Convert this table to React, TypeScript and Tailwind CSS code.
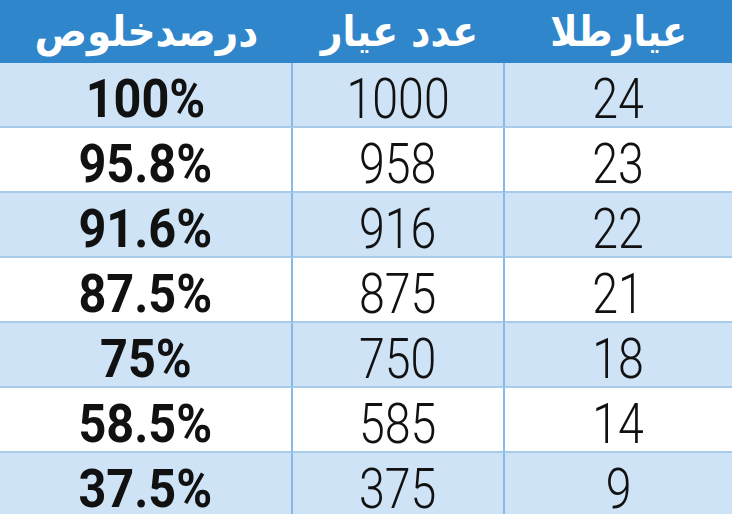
const rows = [
  ['100%', '1000', '24'],
  ['95.8%', '958', '23'],
  ['91.6%', '916', '22'],
  ['87.5%', '875', '21'],
  ['75%', '750', '18'],
  ['58.5%', '585', '14'],
  ['37.5%', '375', '9'],
]

const num = "font-['Roboto',sans-serif]"

export default function App() {
  return (
    <div className="w-[732px] h-[514px] overflow-hidden bg-white">
      <div className="grid grid-cols-[293px_212px_1fr] h-[63px] bg-[#2f86cb] text-white font-['DejaVu_Sans',sans-serif] font-bold text-[42px] leading-none">
        <div className="flex items-center justify-center" dir="rtl">
          <span className="inline-block scale-x-[0.93]">درصدخلوص</span>
        </div>
        <div className="flex items-center justify-center" dir="rtl">
          <span className="inline-block scale-x-[0.9]">عدد عیار</span>
        </div>
        <div className="flex items-center justify-center" dir="rtl">
          <span className="inline-block scale-x-[0.87]">عیارطلا</span>
        </div>
      </div>
      {rows.map((r, i) => (
        <div
          key={i}
          className={`grid grid-cols-[293px_212px_1fr] h-[65px] border-b-2 border-[#a8cbea] text-[#111] leading-none ${i % 2 === 0 ? 'bg-[#cfe3f6]' : 'bg-white'}`}
        >
          <div className={`${num} font-bold text-[54px] flex items-center justify-center pt-2 border-r-2 border-[#86b8e8]`}>
            <span className="inline-block scale-x-[0.9]">{r[0]}</span>
          </div>
          <div className={`${num} font-[350] text-[56px] flex items-center justify-center pt-2 border-r-2 border-[#86b8e8]`}>
            <span className="inline-block scale-x-[0.83]">{r[1]}</span>
          </div>
          <div className={`${num} font-[350] text-[56px] flex items-center justify-center pt-2`}>
            <span className="inline-block scale-x-[0.83]">{r[2]}</span>
          </div>
        </div>
      ))}
    </div>
  )
}
